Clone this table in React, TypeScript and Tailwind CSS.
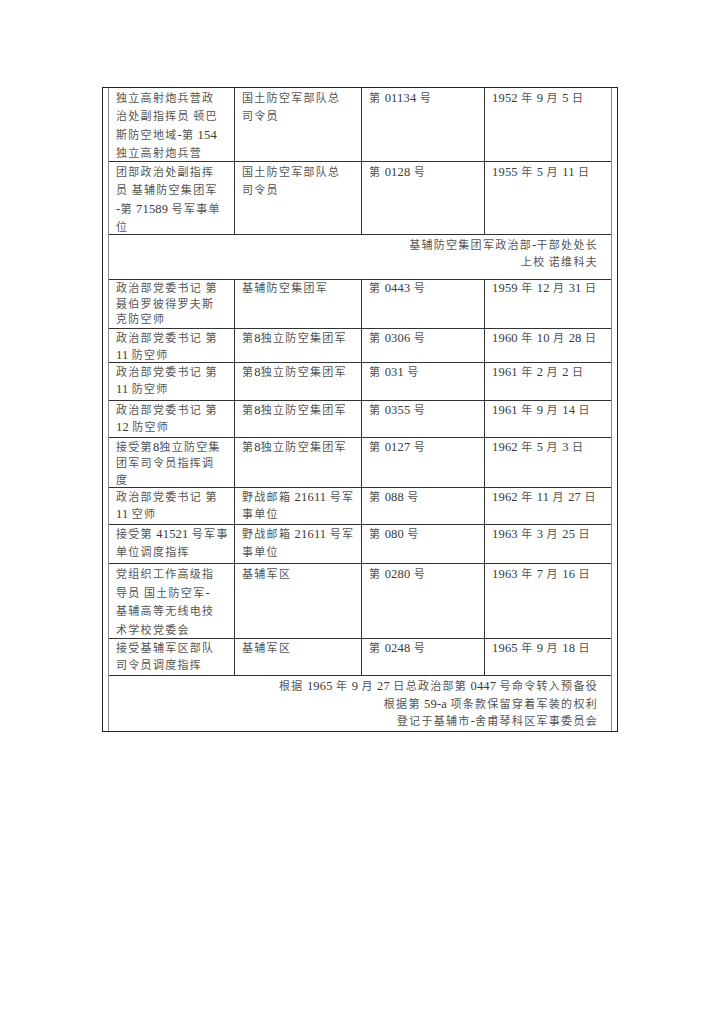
import React from "react";

type Row = {
  h: string;
  lh: string;
  cells: string[][];
};

const rowsA: Row[] = [
  {
    h: "h-[74px]",
    lh: "leading-[18.3px]",
    cells: [
      ["独立高射炮兵营政", "治处副指挥员 顿巴", "斯防空地域-第 154", "独立高射炮兵营"],
      ["国土防空军部队总", "司令员"],
      ["第 01134 号"],
      ["1952 年 9 月 5 日"],
    ],
  },
  {
    h: "h-[73px]",
    lh: "leading-[18.3px]",
    cells: [
      ["团部政治处副指挥", "员 基辅防空集团军", "-第 71589 号军事单", "位"],
      ["国土防空军部队总", "司令员"],
      ["第 0128 号"],
      ["1955 年 5 月 11 日"],
    ],
  },
];

const rowsB: Row[] = [
  {
    h: "h-[49px]",
    lh: "leading-[15.7px]",
    cells: [
      ["政治部党委书记 第", "聂伯罗彼得罗夫斯", "克防空师"],
      ["基辅防空集团军"],
      ["第 0443 号"],
      ["1959 年 12 月 31 日"],
    ],
  },
  {
    h: "h-[34px]",
    lh: "leading-[17px]",
    cells: [["政治部党委书记 第", "11 防空师"], ["第8独立防空集团军"], ["第 0306 号"], ["1960 年 10 月 28 日"]],
  },
  {
    h: "h-[38px]",
    lh: "leading-[17px]",
    cells: [["政治部党委书记 第", "11 防空师"], ["第8独立防空集团军"], ["第 031 号"], ["1961 年 2 月 2 日"]],
  },
  {
    h: "h-[37px]",
    lh: "leading-[17px]",
    cells: [["政治部党委书记 第", "12 防空师"], ["第8独立防空集团军"], ["第 0355 号"], ["1961 年 9 月 14 日"]],
  },
  {
    h: "h-[50px]",
    lh: "leading-[16.3px]",
    cells: [
      ["接受第8独立防空集", "团军司令员指挥调", "度"],
      ["第8独立防空集团军"],
      ["第 0127 号"],
      ["1962 年 5 月 3 日"],
    ],
  },
  {
    h: "h-[37px]",
    lh: "leading-[17px]",
    cells: [["政治部党委书记 第", "11 空师"], ["野战邮箱 21611 号军", "事单位"], ["第 088 号"], ["1962 年 11 月 27 日"]],
  },
  {
    h: "h-[39px]",
    lh: "leading-[17.5px]",
    cells: [["接受第 41521 号军事", "单位调度指挥"], ["野战邮箱 21611 号军", "事单位"], ["第 080 号"], ["1963 年 3 月 25 日"]],
  },
  {
    h: "h-[75px]",
    lh: "leading-[18.5px]",
    cells: [
      ["党组织工作高级指", "导员 国土防空军-", "基辅高等无线电技", "术学校党委会"],
      ["基辅军区"],
      ["第 0280 号"],
      ["1963 年 7 月 16 日"],
    ],
  },
  {
    h: "h-[37px]",
    lh: "leading-[17px]",
    cells: [["接受基辅军区部队", "司令员调度指挥"], ["基辅军区"], ["第 0248 号"], ["1965 年 9 月 18 日"]],
  },
];

function Txt({ s }: { s: string }) {
  const parts = s.split(/([\x00-\x7F]+)/).filter((p) => p.length > 0);
  return (
    <>
      {parts.map((p, i) =>
        /^[\x00-\x7F]+$/.test(p) ? (
          <span key={i} className="text-[12.5px] tracking-[0.2px] text-[#3a3a3a]">
            {p}
          </span>
        ) : (
          <span key={i}>{p}</span>
        )
      )}
    </>
  );
}

function TableRow({ r }: { r: Row }) {
  return (
    <div className={`grid grid-cols-[126px_127px_123px_126px] border-b border-[#333] ${r.h}`}>
      {r.cells.map((lines, i) => (
        <div
          key={i}
          className={`${i < 3 ? "border-r border-[#333]" : ""} pl-[7px] pt-[1px] ${r.lh} whitespace-nowrap overflow-hidden`}
        >
          {lines.map((l, j) => (
            <div key={j}>
              <Txt s={l} />
            </div>
          ))}
        </div>
      ))}
    </div>
  );
}

export default function App() {
  return (
    <div className="bg-white w-[720px] h-[1018px] overflow-hidden font-['Liberation_Serif','Noto_Sans_CJK_SC',serif] text-[11px] tracking-[1.3px] text-[#555]">
      <div className="ml-[102px] mt-[87px] w-[516px] border border-[#222] px-[5px]">
        <div className="border-l border-r border-[#888]">
          {rowsA.map((r, i) => (
            <TableRow key={i} r={r} />
          ))}
          <div className="h-[45px] border-b border-[#333] text-right pr-[13px] pt-[2px] leading-[17px] whitespace-nowrap">
            <div>
              <Txt s="基辅防空集团军政治部-干部处处长" />
            </div>
            <div>
              <Txt s="上校 诺维科夫" />
            </div>
          </div>
          {rowsB.map((r, i) => (
            <TableRow key={i} r={r} />
          ))}
          <div className="h-[55px] text-right pr-[13px] pt-[2px] leading-[17.5px] whitespace-nowrap">
            <div>
              <Txt s="根据 1965 年 9 月 27 日总政治部第 0447 号命令转入预备役" />
            </div>
            <div>
              <Txt s="根据第 59-a 项条款保留穿着军装的权利" />
            </div>
            <div>
              <Txt s="登记于基辅市-舍甫琴科区军事委员会" />
            </div>
          </div>
        </div>
      </div>
    </div>
  );
}
